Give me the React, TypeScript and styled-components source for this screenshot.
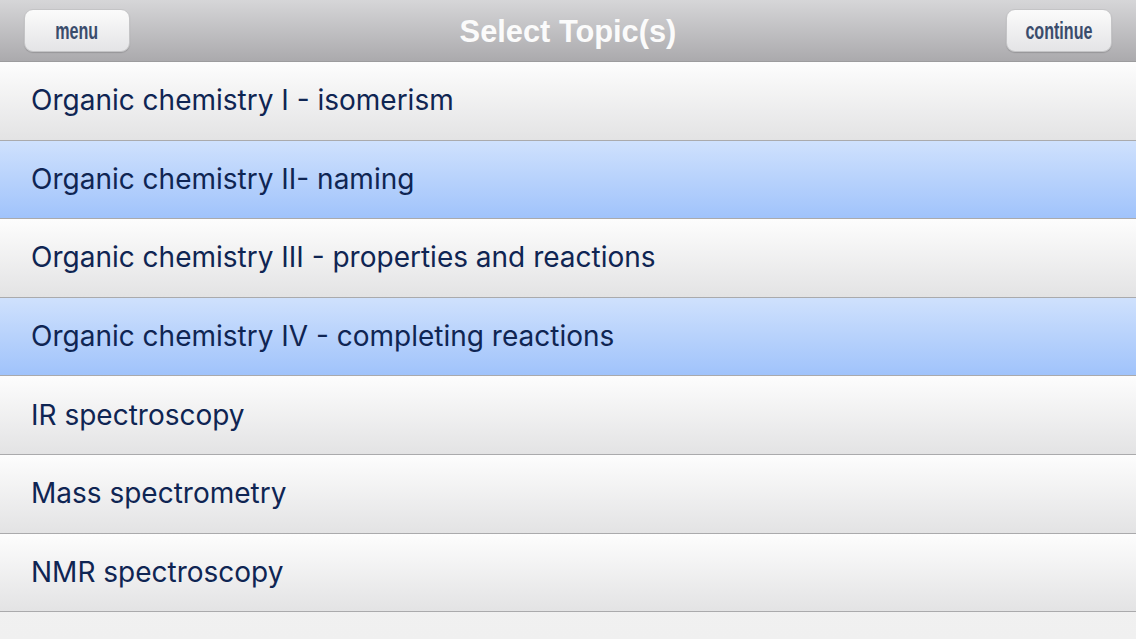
import React from "react";
import styled, { createGlobalStyle } from "styled-components";

const Global = createGlobalStyle`
  html, body { margin: 0; padding: 0; background: #f4f4f4; }
  body { font-family: "Liberation Sans", Arial, sans-serif; overflow: hidden; }
  * { box-sizing: border-box; }
`;

const Page = styled.div`
  width: 1136px;
  height: 639px;
  display: flex;
  flex-direction: column;
  background: linear-gradient(#fdfdfd, #f0f0f0);
  overflow: hidden;
`;

const Header = styled.header`
  height: 62px;
  flex: none;
  display: grid;
  grid-template-columns: 106px 1fr 106px;
  align-items: center;
  padding: 0 24px;
  background: linear-gradient(#d6d6d8, #abaaad);
  border-bottom: 1px solid #9c9c9e;
`;

const NavButton = styled.button`
  height: 43px;
  border-radius: 9px;
  border: 1px solid #c4c4c6;
  background: linear-gradient(#fbfbfb, #e4e4e6);
  box-shadow: 0 1px 1px rgba(0, 0, 0, 0.15);
  padding: 0;
  margin-bottom: 1px;
  display: flex;
  align-items: center;
  justify-content: center;
`;

const ButtonLabel = styled.span`
  display: inline-block;
  color: #3a4c6c;
  font-family: "Liberation Sans", Arial, sans-serif;
  font-weight: bold;
  font-size: 23px;
  transform: scaleX(0.7);
  margin-top: 2px;
`;

const Title = styled.h1`
  margin: 0;
  text-align: center;
  color: #fbfbfb;
  font-family: "Liberation Sans", Arial, sans-serif;
  font-size: 30.8px;
  font-weight: bold;
  margin-top: 2px;
`;

const List = styled.ul`
  list-style: none;
  margin: 0;
  padding: 0;
`;

const Row = styled.li<{ $selected?: boolean }>`
  height: 78.6px;
  display: flex;
  align-items: center;
  padding-left: 31px;
  padding-bottom: 1px;
  border-bottom: 1.5px solid #aaaaac;
  background: ${(p) =>
    p.$selected
      ? "linear-gradient(#cfe1fd, #a0c3fb)"
      : "linear-gradient(#fdfdfd, #e3e3e4)"};
  color: #0f2553;
  font-family: Inter, "Liberation Sans", Arial, sans-serif;
  font-size: 28px;
`;

const topics = [
  { name: "Organic chemistry I - isomerism", selected: false },
  { name: "Organic chemistry II- naming", selected: true },
  { name: "Organic chemistry III - properties and reactions", selected: false },
  { name: "Organic chemistry IV - completing reactions", selected: true },
  { name: "IR spectroscopy", selected: false },
  { name: "Mass spectrometry", selected: false },
  { name: "NMR spectroscopy", selected: false },
];

export default function App() {
  return (
    <>
      <Global />
      <Page>
        <Header>
          <NavButton>
            <ButtonLabel>menu</ButtonLabel>
          </NavButton>
          <Title>Select Topic(s)</Title>
          <NavButton>
            <ButtonLabel>continue</ButtonLabel>
          </NavButton>
        </Header>
        <List>
          {topics.map((t) => (
            <Row key={t.name} $selected={t.selected}>
              {t.name}
            </Row>
          ))}
        </List>
      </Page>
    </>
  );
}
